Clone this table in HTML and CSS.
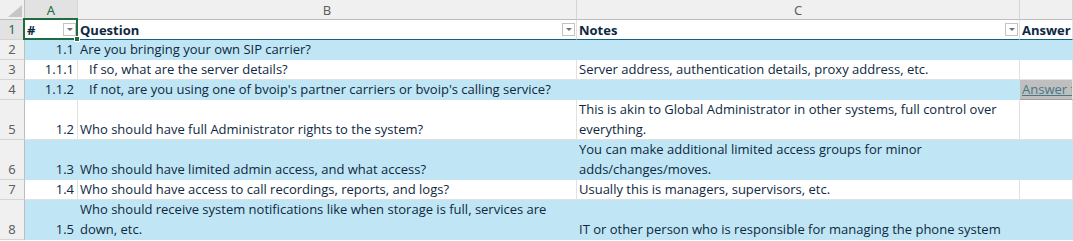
FILE: index.html
```html
<!DOCTYPE html>
<html lang="en">
<head>
    <meta charset="UTF-8">
    <title>Onboarding questions</title>
    <link rel="stylesheet" href="styles.css">
</head>
<body>
    <div class="sheet">
        <!-- cabecera de columnas -->
        <div class="row">
            <div class="corner">
                <svg width="14" height="12" viewBox="0 0 14 12"><polygon points="14,0 14,12 0,12" fill="#c6c6c6"/></svg>
            </div>
            <div class="col-head col-active">A</div>
            <div class="col-head">B</div>
            <div class="col-head">C</div>
            <div class="col-head"></div>
        </div>

        <div class="row">
            <div class="row-head row-active">1</div>
            <div class="cell head first">
                <span class="head-text">#</span>
                <span class="filter"></span>
                <span class="selection"><span class="handle"></span></span>
            </div>
            <div class="cell head"><span class="head-text">Question</span><span class="filter"></span></div>
            <div class="cell head"><span class="head-text">Notes</span><span class="filter"></span></div>
            <div class="cell head"><span class="head-text">Answer</span></div>
        </div>

        <div class="row">
            <div class="row-head">2</div>
            <div class="cell num band">1.1</div>
            <div class="cell band">Are you bringing your own SIP carrier?</div>
            <div class="cell band"></div>
            <div class="cell band"></div>
        </div>

        <div class="row">
            <div class="row-head">3</div>
            <div class="cell num">1.1.1</div>
            <div class="cell indent">If so, what are the server details?</div>
            <div class="cell">Server address, authentication details, proxy address, etc.</div>
            <div class="cell"></div>
        </div>

        <div class="row">
            <div class="row-head">4</div>
            <div class="cell num band">1.1.2</div>
            <div class="cell band indent">If not, are you using one of bvoip's partner carriers or bvoip's calling service?</div>
            <div class="cell band"></div>
            <div class="cell link-cell"><a href="#" class="link">Answer form</a></div>
        </div>

        <div class="row tall">
            <div class="row-head">5</div>
            <div class="cell num">1.2</div>
            <div class="cell">Who should have full Administrator rights to the system?</div>
            <div class="cell wrap">This is akin to Global Administrator in other systems, full control over<br>everything.</div>
            <div class="cell"></div>
        </div>

        <div class="row tall">
            <div class="row-head">6</div>
            <div class="cell num band">1.3</div>
            <div class="cell band">Who should have limited admin access, and what access?</div>
            <div class="cell band wrap">You can make additional limited access groups for minor<br>adds/changes/moves.</div>
            <div class="cell band"></div>
        </div>

        <div class="row">
            <div class="row-head">7</div>
            <div class="cell num">1.4</div>
            <div class="cell">Who should have access to call recordings, reports, and logs?</div>
            <div class="cell">Usually this is managers, supervisors, etc.</div>
            <div class="cell"></div>
        </div>

        <div class="row tall">
            <div class="row-head">8</div>
            <div class="cell num band">1.5</div>
            <div class="cell band wrap">Who should receive system notifications like when storage is full, services are<br>down, etc.</div>
            <div class="cell band">IT or other person who is responsible for managing the phone system</div>
            <div class="cell band"></div>
        </div>
    </div>
</body>
</html>
```

FILE: styles.css
```css
/* Base */
* {
    margin: 0;
    padding: 0;
    box-sizing: border-box;
}

body {
    font-family: "Open Sans", "Noto Sans", sans-serif;
    background-color: #ffffff;
    color: #0e2841;
    overflow: hidden;
}

/* Hoja */
.sheet {
    display: grid;
    grid-template-columns: 25px 53px 499px 443px 1fr;
    grid-auto-rows: 20px;
    width: 1073px;
}

.row {
    display: contents;
}

.row.tall > * {
    grid-row: span 2;
}

.corner {
    background-color: #f0f0f0;
    border-right: 1px solid #bdbdbd;
    border-bottom: 1px solid #bdbdbd;
    display: flex;
    align-items: flex-end;
    justify-content: flex-end;
    padding: 0 2px 2px 0;
}

.col-head {
    background-color: #f0f0f0;
    border-right: 1px solid #d5d5d5;
    border-bottom: 1px solid #bdbdbd;
    color: #5f5f5f;
    font-family: "Noto Sans", sans-serif;
    font-size: 13px;
    display: flex;
    align-items: center;
    justify-content: center;
}

.col-active {
    background-color: #e2e2e2;
    color: #1e6c41;
}

.row-head {
    background-color: #f0f0f0;
    border-right: 1px solid #bdbdbd;
    border-bottom: 1px solid #d5d5d5;
    color: #5f5f5f;
    font-family: "Noto Sans", sans-serif;
    font-size: 13px;
    display: flex;
    align-items: flex-end;
    justify-content: center;
    line-height: 19px;
}

.row-active {
    background-color: #e2e2e2;
    color: #1e6c41;
}

/* Celdas */
.cell {
    position: relative;
    font-size: 13px;
    line-height: 20px;
    padding: 0 2px 0 2px;
    border-right: 1px solid #e1e1e1;
    border-bottom: 1px solid #e1e1e1;
    display: flex;
    align-items: flex-end;
    white-space: nowrap;
    overflow: hidden;
}

.wrap {
    white-space: normal;
}

.band {
    background-color: #c0e6f5;
    border-color: #c0e6f5;
}

.num {
    justify-content: flex-end;
    padding-right: 3px;
}

.indent {
    padding-left: 11px;
}

/* Cabecera de tabla */
.head {
    font-weight: 700;
    border-bottom: 1px solid #156082;
    align-items: center;
    padding-right: 1px;
    overflow: visible;
}

.head-text {
    flex: 1;
}

.first {
    z-index: 2;
}

.filter {
    width: 13px;
    height: 13px;
    border: 1px solid #c4c4c4;
    background-color: #ffffff;
    position: relative;
    flex-shrink: 0;
}

.filter::after {
    content: "";
    position: absolute;
    left: 3px;
    top: 4px;
    border-left: 3px solid transparent;
    border-right: 3px solid transparent;
    border-top: 3px solid #707070;
}

.selection {
    position: absolute;
    top: -2px;
    left: -2px;
    right: -1px;
    bottom: -1px;
    border: 2px solid #1e6c41;
    pointer-events: none;
}

.handle {
    position: absolute;
    right: -4px;
    bottom: -4px;
    width: 6px;
    height: 6px;
    background-color: #1e6c41;
    border: 1px solid #ffffff;
}

/* Enlace */
.link-cell {
    background-color: #bfbfbf;
    border-bottom: 1px solid #a0a0a0;
}

.link {
    color: #467886;
    text-decoration: underline;
}
```
